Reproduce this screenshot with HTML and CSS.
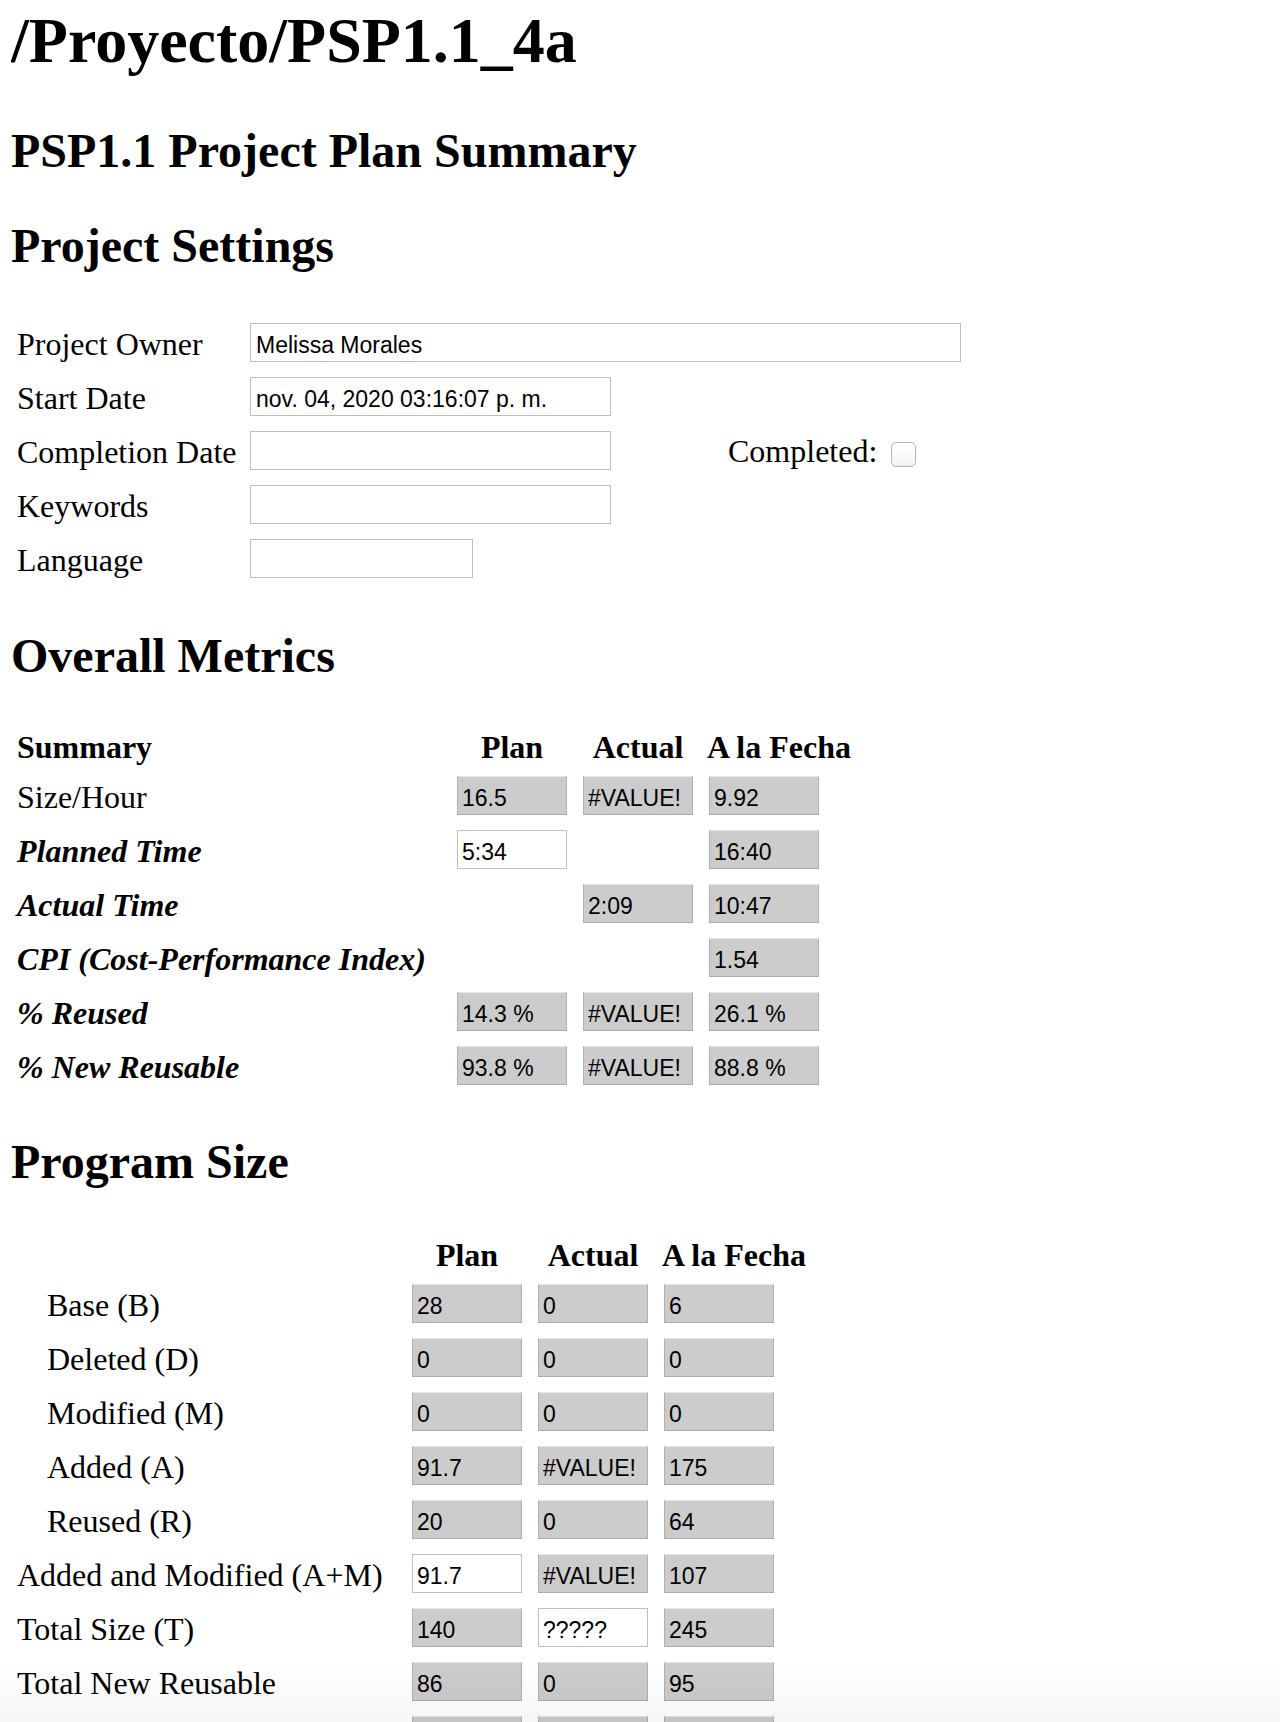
FILE: index.html
```html
<!DOCTYPE html>
<html lang="es">
<head>
<meta charset="utf-8">
<title>PSP1.1 Project Plan Summary</title>
<link rel="stylesheet" href="styles.css">
</head>
<body>
<h1 class="title">/Proyecto/PSP1.1_4a</h1>
<h2>PSP1.1 Project Plan Summary</h2>

<h2>Project Settings</h2>
<table class="settings">
  <tr>
    <td class="lbl">Project Owner</td>
    <td colspan="2"><input class="field owner" type="text" value="Melissa Morales"></td>
  </tr>
  <tr>
    <td class="lbl">Start Date</td>
    <td class="fcol"><input class="field mid" type="text" value="nov. 04, 2020 03:16:07 p. m."></td>
    <td class="done"></td>
  </tr>
  <tr>
    <td class="lbl">Completion Date</td>
    <td class="fcol"><input class="field mid" type="text" value=""></td>
    <td class="done">Completed: <input class="check" type="checkbox"></td>
  </tr>
  <tr>
    <td class="lbl">Keywords</td>
    <td class="fcol"><input class="field mid" type="text" value=""></td>
    <td class="done"></td>
  </tr>
  <tr>
    <td class="lbl">Language</td>
    <td class="fcol"><input class="field short" type="text" value=""></td>
    <td class="done"></td>
  </tr>
</table>

<h2>Overall Metrics</h2>
<table class="grid metrics">
  <tr>
    <th class="lbl">Summary</th>
    <th class="hcol">Plan</th>
    <th class="hcol">Actual</th>
    <th class="hcol last">A la Fecha</th>
  </tr>
  <tr>
    <td class="lbl">Size/Hour</td>
    <td class="val"><input class="cell ro" type="text" value="16.5" readonly></td>
    <td class="val"><input class="cell ro" type="text" value="#VALUE!" readonly></td>
    <td class="val"><input class="cell ro" type="text" value="9.92" readonly></td>
  </tr>
  <tr>
    <td class="lbl em">Planned Time</td>
    <td class="val"><input class="cell" type="text" value="5:34"></td>
    <td class="val"></td>
    <td class="val"><input class="cell ro" type="text" value="16:40" readonly></td>
  </tr>
  <tr>
    <td class="lbl em">Actual Time</td>
    <td class="val"></td>
    <td class="val"><input class="cell ro" type="text" value="2:09" readonly></td>
    <td class="val"><input class="cell ro" type="text" value="10:47" readonly></td>
  </tr>
  <tr>
    <td class="lbl em">CPI (Cost-Performance Index)</td>
    <td class="val"></td>
    <td class="val"></td>
    <td class="val"><input class="cell ro" type="text" value="1.54" readonly></td>
  </tr>
  <tr>
    <td class="lbl em">% Reused</td>
    <td class="val"><input class="cell ro" type="text" value="14.3 %" readonly></td>
    <td class="val"><input class="cell ro" type="text" value="#VALUE!" readonly></td>
    <td class="val"><input class="cell ro" type="text" value="26.1 %" readonly></td>
  </tr>
  <tr>
    <td class="lbl em">% New Reusable</td>
    <td class="val"><input class="cell ro" type="text" value="93.8 %" readonly></td>
    <td class="val"><input class="cell ro" type="text" value="#VALUE!" readonly></td>
    <td class="val"><input class="cell ro" type="text" value="88.8 %" readonly></td>
  </tr>
</table>

<h2>Program Size</h2>
<table class="grid size">
  <tr>
    <th class="lbl"></th>
    <th class="hcol">Plan</th>
    <th class="hcol">Actual</th>
    <th class="hcol last">A la Fecha</th>
  </tr>
  <tr>
    <td class="lbl sub">Base (B)</td>
    <td class="val"><input class="cell ro" type="text" value="28" readonly></td>
    <td class="val"><input class="cell ro" type="text" value="0" readonly></td>
    <td class="val"><input class="cell ro" type="text" value="6" readonly></td>
  </tr>
  <tr>
    <td class="lbl sub">Deleted (D)</td>
    <td class="val"><input class="cell ro" type="text" value="0" readonly></td>
    <td class="val"><input class="cell ro" type="text" value="0" readonly></td>
    <td class="val"><input class="cell ro" type="text" value="0" readonly></td>
  </tr>
  <tr>
    <td class="lbl sub">Modified (M)</td>
    <td class="val"><input class="cell ro" type="text" value="0" readonly></td>
    <td class="val"><input class="cell ro" type="text" value="0" readonly></td>
    <td class="val"><input class="cell ro" type="text" value="0" readonly></td>
  </tr>
  <tr>
    <td class="lbl sub">Added (A)</td>
    <td class="val"><input class="cell ro" type="text" value="91.7" readonly></td>
    <td class="val"><input class="cell ro" type="text" value="#VALUE!" readonly></td>
    <td class="val"><input class="cell ro" type="text" value="175" readonly></td>
  </tr>
  <tr>
    <td class="lbl sub">Reused (R)</td>
    <td class="val"><input class="cell ro" type="text" value="20" readonly></td>
    <td class="val"><input class="cell ro" type="text" value="0" readonly></td>
    <td class="val"><input class="cell ro" type="text" value="64" readonly></td>
  </tr>
  <tr>
    <td class="lbl">Added and Modified (A+M)</td>
    <td class="val"><input class="cell" type="text" value="91.7"></td>
    <td class="val"><input class="cell ro" type="text" value="#VALUE!" readonly></td>
    <td class="val"><input class="cell ro" type="text" value="107" readonly></td>
  </tr>
  <tr>
    <td class="lbl">Total Size (T)</td>
    <td class="val"><input class="cell ro" type="text" value="140" readonly></td>
    <td class="val"><input class="cell" type="text" value="?????"></td>
    <td class="val"><input class="cell ro" type="text" value="245" readonly></td>
  </tr>
  <tr>
    <td class="lbl">Total New Reusable</td>
    <td class="val"><input class="cell ro" type="text" value="86" readonly></td>
    <td class="val"><input class="cell ro" type="text" value="0" readonly></td>
    <td class="val"><input class="cell ro" type="text" value="95" readonly></td>
  </tr>
  <tr>
    <td class="lbl"></td>
    <td class="val"><input class="cell ro" type="text" value="" readonly></td>
    <td class="val"><input class="cell ro" type="text" value="" readonly></td>
    <td class="val"><input class="cell ro" type="text" value="" readonly></td>
  </tr>
</table>

<div class="fade"></div>
</body>
</html>
```

FILE: styles.css
```css
html {
  background: #ffffff;
}

body {
  margin: 0 0 0 11px;
  font-family: "Liberation Serif", "Times New Roman", serif;
  font-size: 32px;
  color: #000000;
}

h1.title {
  font-size: 64px;
  line-height: 74px;
  font-weight: bold;
  margin: 4px 0 45px;
}

h2 {
  font-size: 48px;
  line-height: 55px;
  font-weight: bold;
  margin: 40px 0;
}

table {
  border-collapse: separate;
  border-spacing: 0;
}

td, th {
  vertical-align: middle;
  line-height: 39px;
  white-space: nowrap;
}

/* ---------- inputs ---------- */
.field,
.cell {
  display: block;
  box-sizing: border-box;
  height: 39px;
  margin: 0;
  padding: 7px 5px 1px;
  border: 1px solid #bfbfbf;
  border-radius: 0;
  background: #ffffff;
  font-family: "Liberation Sans", Arial, sans-serif;
  font-size: 23px;
  color: #000000;
  outline: none;
}

.cell {
  width: 110px;
  padding: 7px 4px 1px;
}

.cell.ro {
  background: #cccccc;
  border-color: #e6e6e6 #b0b0b0 #a9a9a9 #b0b0b0;
}

.owner { width: 711px; }
.mid { width: 361px; }
.short { width: 223px; }

/* ---------- settings ---------- */
.settings {
  margin: 42px 0 43px;
}

.settings td {
  padding: 7.5px 0;
}

.settings td.lbl {
  width: 233px;
  padding: 9.5px 0 5.5px 6px;
}

.settings td.fcol {
  width: 361px;
}

.settings td.done {
  width: 233px;
  padding: 9px 0 6px 117px;
}

.check {
  -webkit-appearance: none;
  appearance: none;
  box-sizing: border-box;
  width: 25px;
  height: 25px;
  margin: 0 0 0 6px;
  vertical-align: -5px;
  border: 1px solid #b4b4b4;
  border-radius: 5px;
  background: linear-gradient(#ffffff, #f3f3f3);
  box-shadow: inset 0 -1px 0 rgba(0, 0, 0, 0.04);
}

/* ---------- grids ---------- */
.grid th {
  font-weight: bold;
  line-height: 37px;
  padding: 2px 0 2px;
}

.grid th.lbl {
  text-align: left;
  padding-left: 6px;
}

.grid th.hcol {
  width: 114px;
  padding-right: 12px;
  text-align: center;
}

.grid th.hcol.last {
  width: auto;
  padding-right: 0;
}

.grid td.lbl {
  padding: 9.5px 0 5.5px 6px;
}

.grid td.lbl.em {
  font-weight: bold;
  font-style: italic;
}

.grid td.lbl.sub {
  padding-left: 36px;
}

.grid td.val {
  width: 124px;
  padding: 7.5px 0 7.5px 2px;
}

.metrics {
  margin: 44px 0 42px;
}

.metrics th.lbl {
  width: 438px;
}

.size {
  margin: 46px 0 40px;
}

.size th.lbl {
  width: 393px;
}

/* bottom fade of the viewport */
.fade {
  position: fixed;
  left: 0;
  right: 0;
  bottom: 0;
  height: 56px;
  pointer-events: none;
  background: linear-gradient(rgba(0, 0, 0, 0), rgba(0, 0, 0, 0.035));
}
```
